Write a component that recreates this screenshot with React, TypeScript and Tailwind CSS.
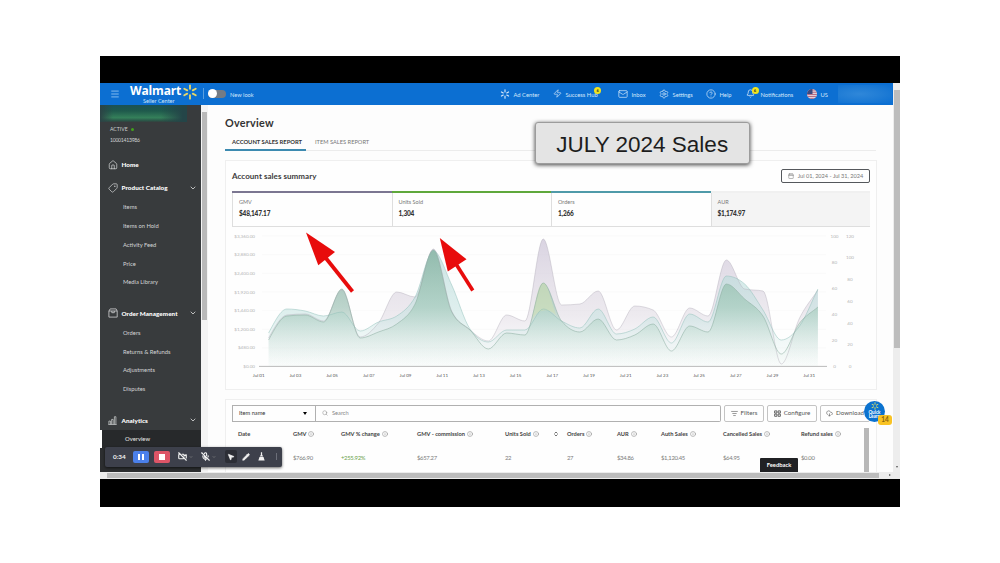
import React from 'react';
import {
    Bell, Calendar, ChevronDown, ChevronsUpDown, CircleHelp, CloudDownload, Home, Info,
    ListFilter, Mail, Menu, MicOff, MousePointer2, Pencil, Search, Settings, Tag, VideoOff, Zap,
} from 'lucide-react';

const productLinks = ['Items', 'Items on Hold', 'Activity Feed', 'Price', 'Media Library'];
const orderLinks = ['Orders', 'Returns & Refunds', 'Adjustments', 'Disputes'];

const stats = [
    { label: 'GMV', value: '$48,147.17', bar: 'bg-[#7b7691]', bg: 'bg-[#fefefe]' },
    { label: 'Units Sold', value: '1,304', bar: 'bg-[#5fa83c]', bg: 'bg-[#fefefe]' },
    { label: 'Orders', value: '1,266', bar: 'bg-[#4f9aa9]', bg: 'bg-[#fefefe]' },
    { label: 'AUR', value: '$1,174.97', bar: 'bg-[#f0f0f0]', bg: 'bg-[#f4f4f4]' },
];

const columns = [
    { label: 'Date', value: '' },
    { label: 'GMV', value: '$766.90' },
    { label: 'GMV % change', value: '+255.92%' },
    { label: 'GMV - commission', value: '$657.27' },
    { label: 'Units Sold', value: '22' },
    { label: 'Orders', value: '27' },
    { label: 'AUR', value: '$34.86' },
    { label: 'Auth Sales', value: '$1,120.45' },
    { label: 'Cancelled Sales', value: '$64.95' },
    { label: 'Refund sales', value: '$0.00' },
];

// y values per day, in chart units
const gmv = [338, 315, 314, 321, 290, 337, 323, 292, 297, 249, 311, 330, 341, 315, 321, 239, 305, 304, 291, 330, 306, 310, 337, 308, 316, 260, 289, 291, 364, 318, 290];
const orders = [333, 309, 311, 316, 312, 331, 322, 316, 297, 251, 285, 329, 342, 330, 330, 309, 321, 328, 309, 334, 329, 317, 343, 314, 322, 276, 284, 310, 340, 326, 289];
const units = [340, 316, 315, 322, 289, 338, 332, 324, 304, 250, 312, 330, 349, 333, 335, 283, 321, 332, 319, 340, 335, 324, 351, 326, 332, 284, 299, 316, 354, 323, 307];

const START_X = 268.6;
const STEP = 18.31;
const BASE_Y = 366;

const linePath = (ys: number[]) => {
    const slope = ys.map((y, i) => {
        if (i === 0 || i === ys.length - 1) return 0;
        const a = y - ys[i - 1];
        const b = ys[i + 1] - y;
        if (a * b <= 0) return 0;
        return Math.sign(a) * Math.min(Math.abs(a + b) / 2, 2 * Math.abs(a), 2 * Math.abs(b));
    });
    slope[0] = (ys[1] - ys[0]) * 1.4;
    slope[ys.length - 1] = ys[ys.length - 1] - ys[ys.length - 2];
    let d = `M${START_X},${ys[0]}`;
    for (let i = 1; i < ys.length; i++) {
        const x = START_X + STEP * i;
        d += `C${x - (STEP * 2) / 3},${ys[i - 1] + slope[i - 1] / 3} ${x - STEP / 3},${ys[i] - slope[i] / 3} ${x},${ys[i]}`;
    }
    return d;
};

const areaPath = (ys: number[]) => `${linePath(ys)}V${BASE_Y}H${START_X}Z`;

const Spark: React.FC<{ className?: string }> = ({ className }) => (
    <svg viewBox="-10 -10 20 20" className={className} fill="none" stroke="currentColor" strokeWidth="2.3" strokeLinecap="round">
        {[0, 60, 120, 180, 240, 300].map(a => (
            <path key={a} d="M0 -4V-8.3" transform={`rotate(${a})`} />
        ))}
    </svg>
);

const FlagUS: React.FC = () => (
    <svg viewBox="0 0 10 10" className="size-[10px]">
        <clipPath id="flag"><circle cx="5" cy="5" r="5" /></clipPath>
        <g clipPath="url(#flag)">
            <path fill="#e9dfe4" d="M0 0h10v10H0z" />
            <path stroke="#b5607a" strokeWidth="1" d="M0 1h10M0 3.2h10M0 5.4h10M0 7.4h10M0 9.4h10" />
            <path fill="#3c4a80" d="M0 0h5.5v5H0z" />
        </g>
    </svg>
);

const OrderIcon: React.FC = () => (
    <svg viewBox="0 0 10 10" className="size-[10px]" fill="none" stroke="currentColor" strokeWidth=".8">
        <path d="M.9 3L2.2.9h5.9L9.2 3v6.1H.9zM.9 3h8.3M3.8 3v1.7h2.5V3" />
    </svg>
);

const AnalyticsIcon: React.FC = () => (
    <svg viewBox="0 0 10 10" className="size-[9px]" fill="none" stroke="currentColor" strokeWidth=".8">
        <path d="M.4 9.4h9.2M1 9.4V5.6h1.7v3.8M4 9.4V3.8h1.7v5.6M7.1 9.4V.8h1.7v8.6" />
    </svg>
);

const ConfigureIcon: React.FC = () => (
    <svg viewBox="0 0 8 8" className="size-[7px]" fill="none" stroke="currentColor" strokeWidth="1">
        <path d="M.7 1h2.6v2.5H.7zM4.7 1h2.6v2.5H4.7zM.7 4.7h2.6v2.5H.7zM4.7 4.7h2.6v2.5H4.7z" />
    </svg>
);

const NavItem: React.FC<{ icon: React.ReactNode; label: string; width: string; badge?: string }> = ({ icon, label, width, badge }) => (
    <div className={`flex shrink-0 items-center gap-[3.5px] whitespace-nowrap text-[#d5e8fa] ${width}`}>
        {icon}
        <span className="mt-[2px] text-[5.8px]">{label}</span>
        {badge && <span className={`flex size-[7px] items-center justify-center rounded-full bg-[#f1e51d] text-[4px] font-bold text-[#333] ${badge}`}>6</span>}
    </div>
);

const MenuHeading: React.FC<{ icon: React.ReactNode; label: string }> = ({ icon, label }) => (
    <div className="flex h-5 shrink-0 items-center pr-1 pl-2 text-white">
        <span className="w-[13.5px] text-[#d0d2d3]">{icon}</span>
        <span className="mt-px flex-1 text-[6.3px] font-black tracking-[0.05px]">{label}</span>
        <ChevronDown size={8} strokeWidth={2.4} className="text-[#e0e0e0]" />
    </div>
);

const MenuLink: React.FC<{ label: string }> = ({ label }) => (
    <div className="flex h-[18.7px] shrink-0 items-center pl-[23px] text-[5.8px] text-[#d3d5d6]">{label}</div>
);

const Sidebar: React.FC = () => (
    <aside className="flex w-[101px] shrink-0 flex-col overflow-hidden bg-[#383b3d]">
        <div className="h-[17px] w-[87px] shrink-0 bg-[linear-gradient(90deg,#2c4345_0%,transparent_15%,transparent_70%,#244548_95%),linear-gradient(180deg,#1b5156_0%,#1f5a4c_35%,#35805a_75%,#2a5a4a_90%,#33413f_100%)]" />
        <div className="mt-[2px] flex h-[11px] shrink-0 items-center gap-[3px] pl-[10px] text-[5.1px] text-[#d0d2d3]">
            ACTIVE <span className="size-[3px] rounded-full bg-[#43a01c]" />
        </div>
        <div className="mb-[7px] flex h-[11px] shrink-0 items-center pl-[10px] text-[5.1px] tracking-[-0.25px] text-[#d0d2d3]">10001413986</div>
        <div className="mb-px flex h-[24px] shrink-0 items-center pl-2 text-[#e4e5e6]">
            <span className="w-[13.5px]"><Home size={10} strokeWidth={1.6} /></span>
            <span className="text-[6.3px] font-black text-white">Home</span>
        </div>
        <MenuHeading icon={<Tag size={10} strokeWidth={1.8} className="rotate-90" />} label="Product Catalog" />
        {productLinks.map(l => <MenuLink key={l} label={l} />)}
        <div className="h-3 shrink-0" />
        <MenuHeading icon={<OrderIcon />} label="Order Management" />
        {orderLinks.map(l => <MenuLink key={l} label={l} />)}
        <div className="h-3 shrink-0" />
        <MenuHeading icon={<AnalyticsIcon />} label="Analytics" />
        <div className="flex h-[18px] shrink-0 items-center bg-[#27292b] text-[5.9px] text-[#e8e8e8]">
            <span className="mr-[23px] h-full w-[2px] bg-white" />
            Overview
        </div>
        <div className="flex-1 bg-[#2c2e30]" />
    </aside>
);

const SalesChart: React.FC = () => (
    <svg viewBox="226 227 650 163" width="650" height="163" className="block shrink-0">
        <defs>
            <linearGradient id="gmvFill" gradientUnits="userSpaceOnUse" x1="0" y1="238" x2="0" y2={BASE_Y}>
                <stop offset="0" stopColor="#cdc5d8" stopOpacity=".75" />
                <stop offset=".6" stopColor="#dcd6e0" stopOpacity=".5" />
                <stop offset="1" stopColor="#e6e2e8" stopOpacity="0" />
            </linearGradient>
            <linearGradient id="ordersFill" gradientUnits="userSpaceOnUse" x1="0" y1="248" x2="0" y2={BASE_Y}>
                <stop offset="0" stopColor="#b0d6d5" stopOpacity=".65" />
                <stop offset=".6" stopColor="#c3e2e0" stopOpacity=".5" />
                <stop offset="1" stopColor="#e5f4f2" stopOpacity="0.1" />
            </linearGradient>
            <linearGradient id="unitsFill" gradientUnits="userSpaceOnUse" x1="0" y1="248" x2="0" y2={BASE_Y}>
                <stop offset="0" stopColor="#85b3a0" stopOpacity=".8" />
                <stop offset=".5" stopColor="#9cc7b5" stopOpacity=".6" />
                <stop offset="1" stopColor="#e4f1ea" stopOpacity="0.1" />
            </linearGradient>
        </defs>
        {[236, 254.7, 273.3, 292, 310.6, 329.3, 348].map(y => (
            <path key={y} d={`M262 ${y}H826`} stroke="#f6f6f6" strokeWidth=".6" />
        ))}
        <path d={areaPath(gmv)} fill="url(#gmvFill)" />
        <path d={areaPath(orders)} fill="url(#ordersFill)" />
        <path d={areaPath(units)} fill="url(#unitsFill)" />
        <path d="M532 320C537 293 539 283 543.3 283S549 293 556 315C549 308 538 308 532 320Z" fill="#cfdfb6" fillOpacity=".6" />
        <path d={linePath(gmv)} fill="none" stroke="#b0abb6" strokeWidth=".6" strokeOpacity=".7" />
        <path d={linePath(orders)} fill="none" stroke="#8ebeb8" strokeWidth=".6" strokeOpacity=".8" />
        <path d={linePath(units)} fill="none" stroke="#8caea0" strokeWidth=".6" strokeOpacity=".9" />
        <path d="M259 366.4H827" stroke="#aaaaaa" strokeWidth=".8" />
        <g fontSize="4.6" fill="#b5b5b5">
            {['$3,360.00', '$2,880.00', '$2,400.00', '$1,920.00', '$1,440.00', '$1,200.00', '$480.00', '$0.00'].map((t, i) => (
                <text key={t} x="255" y={237.7 + i * 18.62} textAnchor="end">{t}</text>
            ))}
            {['100', '80', '60', '40', '20', '0'].map((t, i) => (
                <text key={t} x="834.5" y={237.7 + i * 26.1} textAnchor="middle">{t}</text>
            ))}
            {['120', '100', '80', '60', '40', '20', '0'].map((t, i) => (
                <text key={t} x="850" y={237.7 + i * 21.7} textAnchor="middle">{t}</text>
            ))}
        </g>
        <g fontSize="4.5" fill="#555" textAnchor="middle">
            {['01', '03', '05', '07', '09', '11', '13', '15', '17', '19', '21', '23', '25', '27', '29', '31'].map((t, i) => (
                <text key={t} x={258.7 + i * 36.7} y="377.2">Jul {t}</text>
            ))}
        </g>
    </svg>
);

const App: React.FC = () => {
    return (
        <div className="h-[563px] w-[1000px] overflow-hidden bg-white px-[100px] pt-14 font-['Lato',sans-serif] leading-none">
            <div className="relative flex h-[450.5px] w-[800px] flex-col bg-black pt-[26.5px]">
                <div className="flex h-[389.5px] bg-white">
                    <div className="flex w-[793px] flex-col">
                        <header className="flex h-[22.5px] shrink-0 items-center bg-[#0c6fd2]">
                            <div className="w-[30px] pl-[10px] text-[#a9d4f7]"><Menu size={10} strokeWidth={1.8} /></div>
                            <div className="w-[52px] text-white">
                                <div className="font-['Open_Sans',sans-serif] text-[12px] leading-[14px] font-bold tracking-[-0.15px]">Walmart</div>
                                <div className="pl-[13px] text-[5.6px] leading-[6px] whitespace-nowrap text-[#cfe5fa]">Seller Center</div>
                            </div>
                            <Spark className="mb-[3px] size-[16px] text-[#e6d668]" />
                            <div className="ml-[5px] h-[11px] w-px bg-[#5a9fe0]" />
                            <div className="ml-[4px] flex h-[8px] w-[18px] items-center rounded-full bg-[#747b84]">
                                <span className="size-[9px] rounded-full bg-white" />
                            </div>
                            <span className="ml-[4px] mt-[2px] text-[5.7px] text-[#cfe5fa]">New look</span>
                            <div className="ml-auto flex h-full w-[393px] items-center">
                                <NavItem icon={<Spark className="size-[10px]" />} label="Ad Center" width="w-[53px]" />
                                <NavItem icon={<Zap size={9} strokeWidth={1.8} />} label="Success Hub" width="w-[65px]" badge="-ml-[7px] mb-[6px]" />
                                <NavItem icon={<Mail size={10} strokeWidth={1.7} />} label="Inbox" width="w-[41px]" />
                                <NavItem icon={<Settings size={10} strokeWidth={1.7} />} label="Settings" width="w-[47px]" />
                                <NavItem icon={<CircleHelp size={10} strokeWidth={1.7} />} label="Help" width="w-[40px]" />
                                <div className="relative w-[61px]">
                                    <NavItem icon={<Bell size={9} strokeWidth={2} className="mr-[2px]" />} label="Notifications" width="w-[61px]" />
                                    <span className="absolute -top-[2px] left-[5.5px] flex size-[7px] items-center justify-center rounded-full bg-[#f1e51d] text-[4px] font-bold text-[#333]">6</span>
                                </div>
                                <NavItem icon={<FlagUS />} label="US" width="w-[31px]" />
                                <div className="h-[18px] w-[54px] bg-[radial-gradient(ellipse_at_40%_50%,#2f87d9_0%,#1f7cd5_50%,#0c6fd2_100%)]" />
                            </div>
                        </header>

                        <div className="flex h-[367px]">
                            <Sidebar />
                            <div className="w-[7px] shrink-0 bg-[#f4f4f4] pt-[7px]">
                                <div className="ml-px h-[208px] w-[5px] bg-[#b9b9b9]" />
                            </div>

                            <main className="flex min-w-0 flex-1 flex-col overflow-hidden bg-[#fdfdfd] pl-[17px]">
                                <h1 className="mt-[13px] h-[12px] text-[10.8px] font-bold tracking-[0.25px] text-[#333]">Overview</h1>
                                <div className="mt-[3px] flex h-[19px] w-[651px] shrink-0 border-b border-[#ececec]">
                                    <div className="relative w-[81px] pt-[7.5px] pl-[7px] text-[5.8px] font-bold whitespace-nowrap text-[#333]">
                                        ACCOUNT SALES REPORT
                                        <span className="absolute -bottom-px left-0 h-[2px] w-[81px] bg-[#3c8ab0]" />
                                    </div>
                                    <div className="pt-[7.5px] pl-[9px] text-[5.7px] text-[#777]">ITEM SALES REPORT</div>
                                </div>

                                <section className="mt-[9px] flex h-[230px] w-[652px] shrink-0 flex-col border border-[#efefef] bg-[#fefefe]">
                                    <div className="flex h-[30px] shrink-0 items-center justify-between pr-[6px] pl-[6px]">
                                        <h2 className="text-[8px] font-bold tracking-[0.05px] text-[#3c3c3c]">Account sales summary</h2>
                                        <div className="flex h-[13.5px] w-[89px] items-center justify-center gap-1 rounded-[2px] border border-[#55585c] text-[5.6px] text-[#777]">
                                            <Calendar size={6} strokeWidth={2} /> Jul 01, 2024 - Jul 31, 2024
                                        </div>
                                    </div>
                                    <div className="ml-[6px] grid h-[36px] w-[638px] shrink-0 grid-cols-4">
                                        {stats.map(s => (
                                            <div key={s.label} className={`flex flex-col ${s.bg}`}>
                                                <div className={`h-[2px] shrink-0 ${s.bar}`} />
                                                <div className="flex-1 border-b border-l border-[#dedede] pl-[6px]">
                                                    <div className="mt-[7.5px] text-[5.5px] text-[#777]">{s.label}</div>
                                                    <div className="mt-[5.5px] text-[6.5px] font-black tracking-[-0.2px] text-[#333]">{s.value}</div>
                                                </div>
                                            </div>
                                        ))}
                                    </div>
                                    <SalesChart />
                                </section>

                                <section className="mt-[9px] h-[80px] w-[652px] shrink-0 border border-[#efefef] bg-[#fefefe]">
                                    <div className="mt-[5px] ml-[6px] flex h-[17px] text-[5.7px] text-[#555]">
                                        <div className="flex w-[84px] items-center justify-between border border-[#b0b0b0] px-[6px] text-[#333]">
                                            Item name
                                            <span className="mr-[2px] border-x-[2.5px] border-t-[3px] border-x-transparent border-t-black" />
                                        </div>
                                        <div className="flex w-[405px] items-center gap-[4px] rounded-r-[2px] border border-l-0 border-[#b0b0b0] pl-[6px] text-[#888]">
                                            <Search size={6} strokeWidth={2} /> Search
                                        </div>
                                        <div className="ml-[3px] flex w-[40px] items-center justify-center gap-[3px] rounded-[2px] border border-[#c4c4c4] text-[6.2px]">
                                            <ListFilter size={7} strokeWidth={2} /> Filters
                                        </div>
                                        <div className="ml-[3px] flex w-[50px] items-center justify-center gap-[3px] rounded-[2px] border border-[#c4c4c4] text-[6.2px]">
                                            <ConfigureIcon /> Configure
                                        </div>
                                        <div className="ml-[3px] flex w-[50px] items-center justify-center gap-[3px] rounded-[2px] border border-[#c4c4c4] text-[6.2px]">
                                            <CloudDownload size={7} strokeWidth={2} /> Download
                                        </div>
                                    </div>
                                    <div className="flex">
                                        <div className="ml-[12px] grid w-[626px] grid-cols-[55px_48px_76px_88px_62px_50px_44px_62px_78px_63px]">
                                            {columns.map(c => (
                                                <div key={c.label} className="whitespace-nowrap">
                                                    <div className="flex h-[24px] items-center gap-[2px] text-[5.7px] font-bold text-[#444]">
                                                        {c.label}
                                                        {c.label !== 'Date' && <Info size={6} strokeWidth={1.8} className="text-[#777]" />}
                                                        {c.label === 'Units Sold' && <ChevronsUpDown size={6} strokeWidth={3} className="ml-auto mr-[8px]" />}
                                                    </div>
                                                    <div className={`flex h-[24px] items-center text-[5.9px] tracking-[-0.3px] ${c.label === 'GMV % change' ? 'text-[#6ba24c]' : 'text-[#7c7c7c]'}`}>{c.value}</div>
                                                </div>
                                            ))}
                                        </div>
                                        <div className="mt-[6px] h-[50px] w-[5px] bg-[#b8b8b8]" />
                                    </div>
                                </section>
                            </main>
                        </div>
                    </div>
                    <div className="w-[7px] bg-[#ededed] pt-[7px]">
                        <div className="ml-px h-[258px] w-[6px] bg-[#bdbdbd]" />
                        <div className="mt-[118px] flex justify-center">
                            <span className="border-x-[1.5px] border-t-[2px] border-x-transparent border-t-[#555]" />
                        </div>
                    </div>
                </div>
                <div className="flex h-[6.5px] items-center bg-[#ececec]">
                    <div className="ml-[7px] h-[5px] w-[772px] bg-[#bcbcbc]" />
                    <span className="ml-[10px] border-y-[1.5px] border-l-[2px] border-y-transparent border-l-[#555]" />
                </div>

                {/* floating widgets */}
                <div className="absolute top-[402px] left-[660px] flex h-[14px] w-[38px] items-center justify-center rounded-t-[1px] bg-[#202124] text-[5.8px] font-bold text-white">Feedback</div>
                <div className="absolute top-[344.5px] left-[764px] flex size-[21px] flex-col items-center rounded-full bg-[#0b72cf] text-center text-[4.6px] leading-[4.6px] font-bold text-white">
                    <Spark className="mt-[1px] size-[8px] text-[#d9dc6a]" />
                    Quick<br />Learn
                </div>
                <div className="absolute top-[358.5px] left-[778px] flex h-[10.5px] w-[14px] items-center justify-center rounded-[3px] bg-[#f9c323] text-[6.5px] font-bold text-[#8a6410]">14</div>

                {/* recorder toolbar */}
                <div className="absolute top-[390.5px] left-[5px] flex h-[20.5px] w-[177px] items-center rounded-[2px] bg-[#3d404b] text-[#f2f2f2] shadow-[0_1px_3px_rgba(0,0,0,0.6)]">
                    <span className="w-[28px] pl-[8px] text-[6.4px] font-bold">0:34</span>
                    <span className="flex h-[12.5px] w-[16px] items-center justify-center gap-[1.5px] rounded-[2px] bg-[#4b80ea]">
                        <span className="h-[6px] w-[2px] bg-white" />
                        <span className="h-[6px] w-[2px] bg-white" />
                    </span>
                    <span className="ml-[5px] flex h-[12.5px] w-[16px] items-center justify-center rounded-[2px] bg-[#dd5567]">
                        <span className="size-[5.5px] bg-white" />
                    </span>
                    <VideoOff size={9} strokeWidth={3} className="ml-[8px]" />
                    <ChevronDown size={4} strokeWidth={3} className="ml-[2px] text-[#999]" />
                    <MicOff size={9} strokeWidth={3} className="ml-[8px]" />
                    <ChevronDown size={4} strokeWidth={3} className="ml-[2px] text-[#999]" />
                    <span className="ml-[9px] flex h-[13px] w-[12px] items-center justify-center rounded-[2px] bg-[#2c2e36]">
                        <MousePointer2 size={8} fill="currentColor" />
                    </span>
                    <Pencil size={8} fill="currentColor" className="ml-[5px]" />
                    <svg viewBox="0 0 8 10" className="ml-[8px] h-[9px] w-[7px] fill-current">
                        <path d="M3.3 0h1.4v3L6 5H2l1.3-2zM1.7 5.6h4.6L7.6 9.5H.4z" />
                    </svg>
                    <span className="ml-[11px] h-[7px] w-px bg-[#6b6e78]" />
                </div>

                {/* video annotations */}
                <div className="absolute top-[66px] left-[434.5px] flex h-[41.5px] w-[215.5px] items-center justify-center rounded-[3px] border border-[#9c9c9c] bg-[#e4e4e4] pt-[4px] font-['Liberation_Sans',sans-serif] text-[22.5px] whitespace-nowrap text-[#1d1d1d] shadow-[0_1px_4px_rgba(0,0,0,0.75)]">JULY 2024 Sales</div>
                <svg viewBox="300 225 180 75" className="absolute top-[169px] left-[200px] h-[75px] w-[180px]" fill="#e80c0c" stroke="#e80c0c">
                    <path d="M306 232.5L335 252L318.3 265.3Z" stroke="none" />
                    <path d="M325 257L352.5 291.5" strokeWidth="3.8" />
                    <path d="M439.8 238L466.5 259.3L447.8 271.5Z" stroke="none" />
                    <path d="M456 264L472.8 290.5" strokeWidth="3.6" />
                </svg>
            </div>
        </div>
    );
};

export default App;
